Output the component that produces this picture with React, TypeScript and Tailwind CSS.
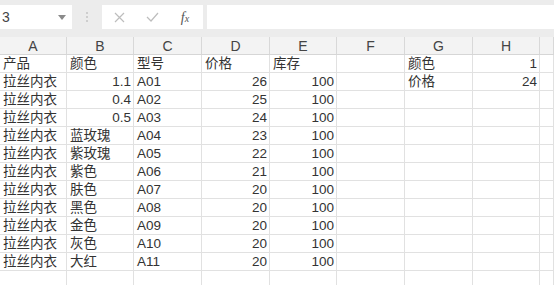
import React from 'react';

type Cell = { v: string; num?: boolean };

const columns = ['A', 'B', 'C', 'D', 'E', 'F', 'G', 'H', ''];

const t = (v: string): Cell => ({ v });
const n = (v: string): Cell => ({ v, num: true });
const e: Cell = { v: '' };

const rows: Cell[][] = [
  [t('产品'), t('颜色'), t('型号'), t('价格'), t('库存'), e, t('颜色'), n('1'), e],
  [t('拉丝内衣'), n('1.1'), t('A01'), n('26'), n('100'), e, t('价格'), n('24'), e],
  [t('拉丝内衣'), n('0.4'), t('A02'), n('25'), n('100'), e, e, e, e],
  [t('拉丝内衣'), n('0.5'), t('A03'), n('24'), n('100'), e, e, e, e],
  [t('拉丝内衣'), t('蓝玫瑰'), t('A04'), n('23'), n('100'), e, e, e, e],
  [t('拉丝内衣'), t('紫玫瑰'), t('A05'), n('22'), n('100'), e, e, e, e],
  [t('拉丝内衣'), t('紫色'), t('A06'), n('21'), n('100'), e, e, e, e],
  [t('拉丝内衣'), t('肤色'), t('A07'), n('20'), n('100'), e, e, e, e],
  [t('拉丝内衣'), t('黑色'), t('A08'), n('20'), n('100'), e, e, e, e],
  [t('拉丝内衣'), t('金色'), t('A09'), n('20'), n('100'), e, e, e, e],
  [t('拉丝内衣'), t('灰色'), t('A10'), n('20'), n('100'), e, e, e, e],
  [t('拉丝内衣'), t('大红'), t('A11'), n('20'), n('100'), e, e, e, e],
  [e, e, e, e, e, e, e, e, e],
];

const gridCols = 'grid grid-cols-[67px_67px_68px_68px_67px_68px_68px_67px_1fr]';

export default function App() {
  return (
    <div
      className="w-[554px] h-[285px] overflow-hidden bg-white text-[#333]"
      style={{ fontFamily: '"Liberation Sans", "Noto Sans CJK SC", sans-serif' }}
    >
      {/* Formula bar */}
      <div className="h-[37px] bg-[#ececec] flex items-start pt-[5px]">
        <div className="w-[72px] h-[24px] bg-white flex items-center justify-between pl-[2px] pr-[6px] text-[14px] text-[#444]">
          <span>3</span>
          <svg width="8" height="5" viewBox="0 0 8 5">
            <path d="M0 0 L8 0 L4 5 Z" fill="#8a8a8a" />
          </svg>
        </div>
        <div className="w-[30px] h-[24px] flex flex-col items-center justify-center gap-[2px]">
          <span className="w-[2px] h-[2px] bg-[#c4c4c4] rounded-full" />
          <span className="w-[2px] h-[2px] bg-[#c4c4c4] rounded-full" />
          <span className="w-[2px] h-[2px] bg-[#c4c4c4] rounded-full" />
        </div>
        <div className="w-[101px] h-[24px] bg-white flex items-center">
          <div className="w-[34px] flex justify-center">
            <svg width="11" height="11" viewBox="0 0 11 11">
              <path d="M1 1 L10 10 M10 1 L1 10" stroke="#bdbdbd" strokeWidth="1.2" />
            </svg>
          </div>
          <div className="w-[32px] flex justify-center">
            <svg width="13" height="10" viewBox="0 0 13 10">
              <path d="M1 5 L5 9 L12 1" stroke="#bdbdbd" strokeWidth="1.2" fill="none" />
            </svg>
          </div>
          <div
            className="w-[34px] flex justify-center text-[14px] italic text-[#555]"
            style={{ fontFamily: '"Liberation Serif", serif' }}
          >
            f<span className="text-[10px] mt-[4px]">x</span>
          </div>
        </div>
        <div className="ml-[4px] flex-1 h-[24px] bg-white" />
      </div>

      {/* Column headers */}
      <div className={`${gridCols} h-[18px] bg-[#f3f3f3] border-b border-[#d6d6d6]`}>
        {columns.map((c, i) => (
          <div
            key={i}
            className="border-r border-[#d8d8d8] flex items-center justify-center text-[14px] leading-none text-[#444]"
          >
            {c}
          </div>
        ))}
      </div>

      {/* Cells */}
      {rows.map((row, r) => (
        <div key={r} className={`${gridCols} h-[18px]`}>
          {row.map((cell, c) => (
            <div
              key={c}
              className={`border-r border-b border-[#e1e1e1] flex items-center text-[13.5px] leading-none whitespace-nowrap overflow-hidden ${
                cell.num ? 'justify-end pr-[2px]' : 'justify-start pl-[3px]'
              }`}
            >
              {cell.v}
            </div>
          ))}
        </div>
      ))}
    </div>
  );
}
